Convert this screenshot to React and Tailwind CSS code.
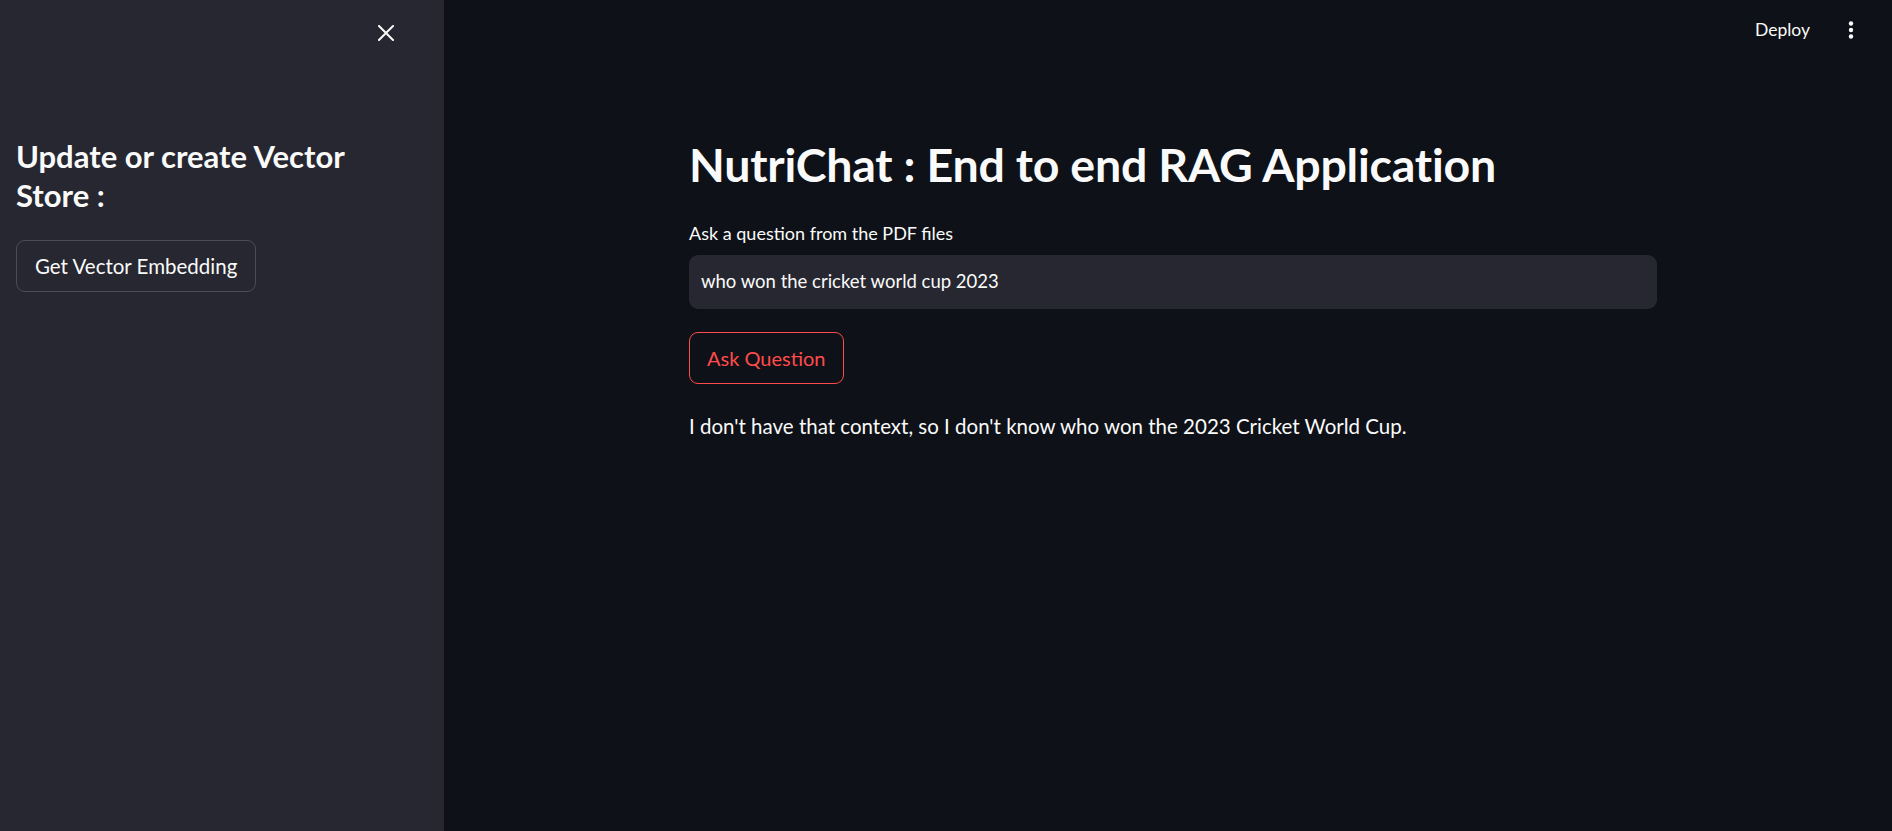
import React from 'react';

const font = { fontFamily: 'Lato, "Noto Sans", sans-serif' };

function CloseIcon() {
  return (
    <svg width="16" height="16" viewBox="0 0 16 16" fill="none">
      <path d="M1 1 L15 15 M15 1 L1 15" stroke="#fafafa" strokeWidth="2" strokeLinecap="square" />
    </svg>
  );
}

function Kebab() {
  return (
    <svg width="6" height="18" viewBox="0 0 6 18" fill="#fafafa">
      <circle cx="3" cy="2.5" r="2.2" />
      <circle cx="3" cy="9" r="2.2" />
      <circle cx="3" cy="15.5" r="2.2" />
    </svg>
  );
}

export default function App() {
  return (
    <div className="flex h-screen w-full text-[#fafafa]" style={font}>
      {/* Sidebar */}
      <aside className="w-[444px] shrink-0 bg-[#262730] flex flex-col">
        <div className="flex justify-end pt-[25px] pr-[50px]">
          <button className="w-4 h-4 flex items-center justify-center">
            <CloseIcon />
          </button>
        </div>
        <div className="pl-4 pr-[40px] pt-[96px]">
          <h2 className="text-[31px] font-bold leading-[39px] tracking-[0px]">
            Update or create Vector Store :
          </h2>
          <button className="mt-[25px] h-[52px] px-[18px] rounded-[9px] border border-[#4b4c55] bg-[#262730] text-[20.5px]">
            Get Vector Embedding
          </button>
        </div>
      </aside>

      {/* Main */}
      <main className="flex-1 bg-[#0e1117] flex flex-col">
        <header className="flex items-center justify-end h-[60px] pr-[38px] gap-[38px]">
          <span className="text-[17.5px]">Deploy</span>
          <Kebab />
        </header>
        <div className="pl-[10px]">
          <div className="w-[968px] mx-auto pt-[74px]">
            <h1 className="text-[46.5px] font-bold leading-[60px] tracking-[-0.2px]">
              NutriChat : End to end RAG Application
            </h1>
            <label className="block mt-[28px] text-[18px] leading-[22px]">Ask a question from the PDF files</label>
            <div className="mt-[11px] h-[54px] rounded-[9px] bg-[#262730] flex items-center px-[12px] text-[18.5px]">
              who won the cricket world cup 2023
            </div>
            <button className="mt-[23px] h-[52px] px-[17px] rounded-[9px] border border-[#ff4b4b] text-[#ff4b4b] text-[20px]">
              Ask Question
            </button>
            <p className="mt-[28px] text-[20.5px] leading-[28px]">
              I don't have that context, so I don't know who won the 2023 Cricket World Cup.
            </p>
          </div>
        </div>
      </main>
    </div>
  );
}
